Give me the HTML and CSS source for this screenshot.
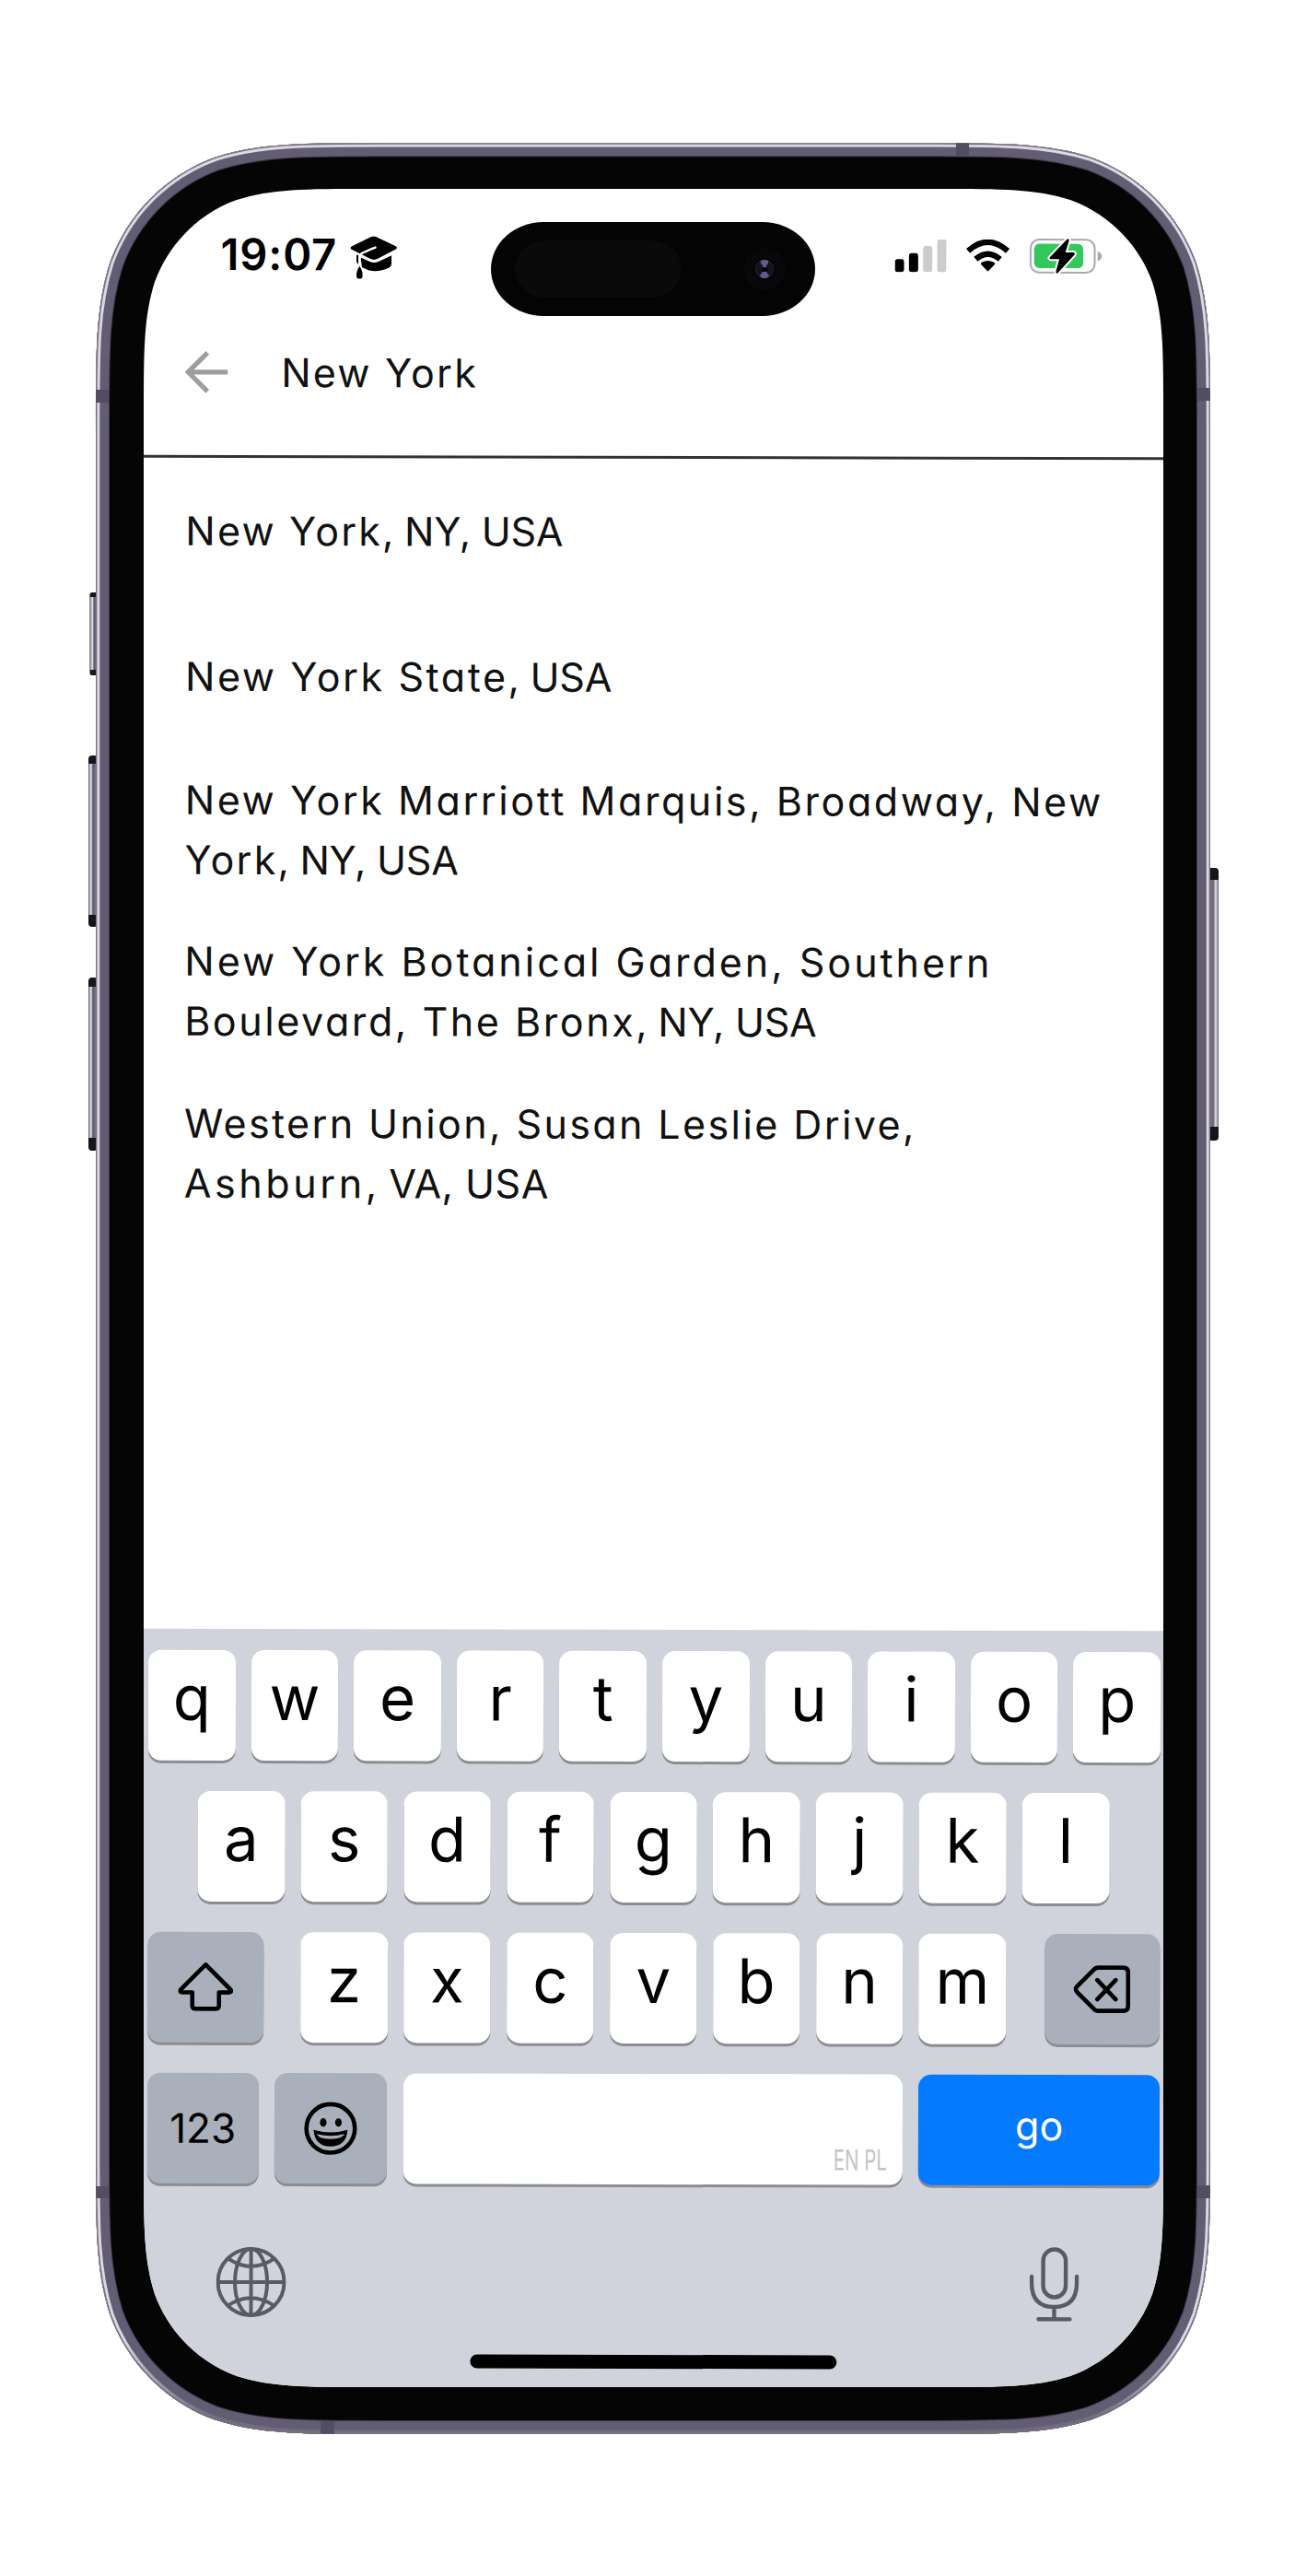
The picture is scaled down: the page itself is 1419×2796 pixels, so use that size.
FILE: index.html
```html
<!DOCTYPE html>
<html lang="en">
<head>
<meta charset="utf-8">
<title>Location search</title>
<link rel="stylesheet" href="styles.css">
</head>
<body>
<main class="stage">
  <svg class="frame" viewBox="0 0 1419 2796" aria-hidden="true">
    <defs>
      <path id="body" d="M417.4,155.300 H1000.600 c90.300,0 135.400,0 183.900,15.400 c53.100,19.300 94.800,61 114.100,114.100 c15.400,48.500 15.400,93.600 15.400,183.900 V2328.600 c0,90.300 0,135.400 -15.400,183.900 c-19.300,53.100 -61,94.800 -114.100,114.100 c-48.500,15.400 -93.600,15.400 -183.900,15.400 H417.400 c-90.300,0 -135.400,0 -183.900,-15.400 c-53.100,-19.300 -94.800,-61 -114.100,-114.100 c-15.400,-48.500 -15.400,-93.600 -15.400,-183.900 V468.700 c0,-90.300 0,-135.400 15.400,-183.900 c19.300,-53.100 61,-94.800 114.100,-114.100 c48.500,-15.400 93.600,-15.400 183.900,-15.400 Z"/>
      <clipPath id="clip"><use href="#body"/></clipPath>
      <linearGradient id="shine" gradientUnits="userSpaceOnUse" x1="0" y1="2540" x2="0" y2="2625"><stop offset="0" stop-color="#dcd9e4"/><stop offset="1" stop-color="#716b80"/></linearGradient>
      <linearGradient id="btn" x1="0" x2="1" y1="0" y2="0"><stop offset="0" stop-color="#8d8999"/><stop offset=".3" stop-color="#e6e3ec"/><stop offset=".5" stop-color="#5b5568"/><stop offset="1" stop-color="#8b8599"/></linearGradient>
      <linearGradient id="btnr" x1="1" x2="0" y1="0" y2="0"><stop offset="0" stop-color="#9a96a5"/><stop offset=".3" stop-color="#d6d3dd"/><stop offset=".5" stop-color="#6b6579"/><stop offset="1" stop-color="#7f798c"/></linearGradient>
    </defs>
    <g>
      <rect x="97.500" y="643" width="9" height="90" rx="2.500" fill="#17151c"/><rect x="98" y="648" width="8" height="79" fill="url(#btn)"/>
      <rect x="96" y="820" width="10" height="186" rx="4" fill="#17151c"/><rect x="96.300" y="829" width="9" height="164" fill="url(#btn)"/>
      <rect x="96" y="1061" width="10" height="188" rx="4" fill="#17151c"/><rect x="96.300" y="1071" width="9" height="164" fill="url(#btn)"/>
      <rect x="1311" y="942" width="12" height="296" rx="4" fill="#17151c"/><rect x="1312" y="955" width="10.700" height="268" fill="url(#btnr)"/>
    </g>
    <use href="#body" fill="#050505"/>
    <g clip-path="url(#clip)" fill="none">
      <use href="#body" stroke="#3d384a" stroke-width="30"/>
      <use href="#body" stroke="#635d73" stroke-width="28"/>
      <use href="#body" stroke="url(#shine)" stroke-width="8.500"/>
      <use href="#body" stroke="#77737f" stroke-width="2.800"/>
      <g fill="#534d63">
        <rect x="104" y="423" width="14" height="14"/><rect x="1300" y="421" width="14" height="14"/>
        <rect x="104" y="2373" width="14" height="13"/><rect x="1300" y="2372" width="14" height="14"/>
        <rect x="1038" y="155" width="14" height="15"/><rect x="348" y="2628" width="15" height="15"/>
      </g>
    </g>
  </svg>

  <div class="screen">
    <div class="view">
      <div class="status">
        <div class="status-left">
          <span class="time">19:07</span>
          <svg class="hat" viewBox="0 0 156 142"><path d="M70,2 Q78,-1 86,2 L151,33 Q158,38 151,43 L92,74 Q80,80 68,75 L6,44 Q-1,39 6,34Z"/><path d="M36,70 L66,84 Q80,90 94,84 L137,63 V92 Q136,100 128,104 Q80,126 40,102Z"/><path d="M84,37 Q70,42 42,55 Q32,60 32,70 V108" fill="none" stroke="#fff" stroke-width="7" stroke-linecap="round"/><path d="M22,62 H28 V92 Q22,88 22,82Z"/><path d="M32,98 Q44,116 42,132 Q41,140 32,140 Q23,140 22,132 Q21,116 32,98Z"/></svg>
        </div>
        <div class="status-right">
          <svg class="signal" viewBox="0 0 168 108"><rect y="65" width="30" height="42" rx="9"/><rect x="46" y="45" width="30" height="62" rx="9"/><g fill="#ccc"><rect x="92" y="22" width="30" height="85" rx="9"/><rect x="138" width="30" height="107" rx="9"/></g></svg>
          <svg class="wifi" viewBox="0 0 144 106"><path d="M72,106 L51,84 Q46,79 53,75 Q72,65 91,75 Q98,79 93,84Z"/><g fill="none" stroke="#000" stroke-width="19"><path d="M32,65 Q72,31 112,65"/><path d="M7,38 Q72,-20 137,38"/></g></svg>
          <svg class="battery" viewBox="0 0 236 114"><rect x="3.500" y="3.500" width="209" height="107" rx="28" fill="#fff" stroke="#a9a9ab" stroke-width="6"/><rect x="15" y="17" width="160" height="79" rx="17" fill="#34c759"/><path d="M222,41 Q236,48 236,57 Q236,67 222,74Z" fill="#a9a9ab"/><path d="M122,2 L67,60 Q62,66 70,67 H97 L86,108 Q86,116 93,111 L146,53 Q150,46 143,45 H117 L129,6 Q128,-2 122,2Z" stroke="#fff" stroke-width="12" paint-order="stroke"/></svg>
        </div>
      </div>

      <header class="search">
        <svg class="back" viewBox="0 0 48 46" fill="none" stroke="#9e9e9e" stroke-width="5.200"><path d="M47,23 H4 M25,2 L4,23 L25,44"/></svg>
        <span class="query">New York</span>
      </header>

      <ul class="results">
        <li><span>New York<span class="caps">, NY, USA</span></span></li>
        <li><span class="wide-2">New York State<span class="caps">, USA</span></span></li>
        <li><span class="wide-2">New York Marriott Marquis, Broadway, New</span><span>York<span class="caps">, NY, USA</span></span></li>
        <li><span class="wide-3">New York Botanical Garden, Southern</span><span class="wide-2">Boulevard, The Bronx<span class="caps">, NY, USA</span></span></li>
        <li><span class="wide-1">Western Union, Susan Leslie Drive,</span><span class="wide-4">Ashburn<span class="caps-loose">, VA, USA</span></span></li>
      </ul>

      <section class="keyboard">
        <div class="row"><b>q</b><b>w</b><b>e</b><b>r</b><b>t</b><b>y</b><b>u</b><b>i</b><b>o</b><b>p</b></div>
        <div class="row middle"><b>a</b><b>s</b><b>d</b><b>f</b><b>g</b><b>h</b><b>j</b><b>k</b><b>l</b></div>
        <div class="row">
          <div class="key fn wide"><svg class="shift" viewBox="0 0 60 52" preserveAspectRatio="none" fill="none" stroke="#000" stroke-width="4.600" stroke-linejoin="round"><path d="M30,2.500 L57,29 Q59,32 55,32 H44.500 V46 Q44.500,49.500 41,49.500 H19 Q15.500,49.500 15.500,46 V32 H5 Q1,32 3,29Z"/></svg></div>
          <div class="letters"><b>z</b><b>x</b><b>c</b><b>v</b><b>b</b><b>n</b><b>m</b></div>
          <div class="key fn wide"><svg class="delete" viewBox="0 0 62 52" fill="none" stroke="#000" stroke-width="4.600" stroke-linejoin="round" stroke-linecap="round"><path d="M27,2.500 H54 Q59.500,2.500 59.500,8 V44 Q59.500,49.500 54,49.500 H27 Q24,49.500 22,47 L4,29 Q1.500,26 4,23 L22,5 Q24,2.500 27,2.500Z M26,16 L46,37 M46,16 L26,37"/></svg></div>
        </div>
        <div class="row bottom">
          <div class="key fn num">123</div>
          <div class="key fn emoji"><svg viewBox="0 0 58 58"><circle cx="29" cy="29" r="26.300" fill="none" stroke="#000" stroke-width="4.600"/><ellipse cx="21" cy="22.500" rx="3.600" ry="4.600"/><ellipse cx="37.500" cy="22.500" rx="3.600" ry="4.600"/><path d="M10.500,30.500 Q29,36 47.500,30.500 Q46,48.500 29,48.500 Q12,48.500 10.500,30.500Z"/><path d="M14,35 Q29,39 44,35 Q43,40 29,40.500 Q15,40 14,35Z" fill="#a9afbb"/></svg></div>
          <div class="key space"><span class="lang">EN PL</span></div>
          <div class="key go">go</div>
        </div>
        <div class="dock">
          <svg class="globe" viewBox="0 0 76 76" fill="none" stroke="#575b64" stroke-width="4"><circle cx="38" cy="38" r="36"/><ellipse cx="38" cy="38" rx="17.500" ry="36"/><path d="M38,2 V74 M2,38 H74 M13,12.500 Q38,29 63,12.500 M13,63.500 Q38,47 63,63.500"/></svg>
          <svg class="mic" viewBox="0 0 54 81" fill="none" stroke="#575b64" stroke-width="4.400" stroke-linecap="round"><rect x="15" y="2.500" width="24.500" height="52" rx="12.250"/><path d="M2.500,32 V40 Q3,65 27,65 Q51,65 51.500,40 V32 M27,65 V78 M10,78.300 H44"/></svg>
        </div>
        <div class="home"></div>
      </section>
    </div>

    <div class="island">
      <div class="sensor"></div>
      <svg class="camera" viewBox="0 0 46 46"><circle cx="23" cy="23" r="22.500" fill="#08080a"/><circle cx="23" cy="23" r="12" fill="#000"/><circle cx="23" cy="23" r="10" fill="#14131b" stroke="#26252f"/><path d="M19,14 Q23,12 27,14 Q28,17 25,19 V21 H21 V19 Q18,17 19,14Z" fill="#5f5990"/><path d="M21,26 H25 L28,30 Q27,33 23,33 Q19,33 18,30Z" fill="#5f5990"/><ellipse cx="23" cy="23.500" rx="3.500" ry="2.300" fill="#040406"/></svg>
    </div>
  </div>
</main>
</body>
</html>
```
FILE: styles.css
```css
* { box-sizing: border-box; }
body { margin: 0; background: #fff; font-family: Inter, "Liberation Sans", sans-serif; color: #000; }
svg { display: block; flex: none; }

.stage { position: relative; width: 1419px; height: 2796px; padding: 205px 156px; overflow: hidden; }
.frame { position: absolute; inset: 0; width: 1419px; height: 2796px; }

.screen {
  position: relative; width: 1107px; height: 2386px; background: #fff;
  clip-path: path("M244.600,0 H862.400 c70.400,0 105.700,0 143.600,12 c41.300,15 74,47.700 89,89 c12,37.900 12,73.200 12,143.600 V2141.400 c0,70.400 0,105.700 -12,143.600 c-15,41.300 -47.700,74 -89,89 c-37.900,12 -73.200,12 -143.600,12 H244.600 c-70.400,0 -105.700,0 -143.600,-12 c-41.300,-15 -74,-47.700 -89,-89 c-12,-37.900 -12,-73.200 -12,-143.600 V244.600 c0,-70.400 0,-105.700 12,-143.600 c15,-41.300 47.700,-74 89,-89 c37.900,-12 73.200,-12 143.600,-12 Z");
}
.view { display: flex; flex-direction: column; height: 2392px; margin: 0 -6px; transform: rotate(0.13deg); }

.status { display: flex; justify-content: space-between; align-items: center; height: 143px; padding: 0 75px 0 87px; }
.status-left, .status-right { display: flex; align-items: center; }
.time { width: 140px; font-size: 47px; font-weight: 600; line-height: 56px; letter-spacing: 0.900px; white-space: nowrap; }
.hat { width: 52px; height: 47px; margin-top: 8px; }
.signal { width: 56px; height: 36px; }
.wifi { width: 48px; height: 35px; margin-left: 21px; }
.battery { width: 79px; height: 38px; margin-left: 21px; }

.search { display: flex; align-items: center; height: 150px; padding: 1px 50px 35px 48px; border-bottom: 3px solid #333; }
.back { width: 48px; height: 46px; }
.query { margin-left: 57px; font-size: 43px; letter-spacing: 2.200px; color: #111; white-space: nowrap; font-feature-settings: "cv11"; }

.results { flex: 1; margin: 0; padding: 0 0 0 49.500px; list-style: none; font-size: 43px; line-height: 65px; letter-spacing: 2.200px; color: #111; font-feature-settings: "cv11"; }
.results li { display: flex; flex-direction: column; align-items: flex-start; justify-content: center; min-height: 158px; padding: 22.750px 0; }
.results span { white-space: nowrap; }
.wide-1 { letter-spacing: 2.400px; }
.wide-2 { letter-spacing: 2.580px; }
.wide-3 { letter-spacing: 3px; }
.wide-4 { letter-spacing: 3.600px; }
.caps { letter-spacing: -0.250px; }
.caps-loose { letter-spacing: 0.500px; }

.keyboard { height: 828px; padding: 23px 8px 0 12px; background: #d0d3db; }
.row { display: flex; justify-content: space-between; height: 119.500px; margin-bottom: 33.500px; }
.row b, .key { display: flex; align-items: center; justify-content: center; height: 119.500px; border-radius: 14px; background: #fff; box-shadow: 0 3px 0 #8b8d92; }
.row b { width: 94.500px; padding-bottom: 16px; font-size: 67px; font-weight: 400; }
.row .fn { background: #a9afbb; }
.middle { padding: 0 55.500px 0 54px; }
.letters { display: flex; justify-content: space-between; width: 766px; margin-left: -1px; }
.wide { width: 125.500px; }
.shift { width: 60px; height: 53px; }
.delete { width: 62px; height: 52px; }
.num { width: 120.500px; font-size: 44px; }
.emoji { width: 122px; }
.emoji svg { width: 58px; height: 58px; }
.space { width: 542px; }
.row .space { align-items: flex-end; justify-content: flex-end; padding: 0 17px 8px; }
.lang { font-size: 31px; line-height: 38px; color: #c4c4c6; transform: scaleX(0.660); transform-origin: right; white-space: nowrap; }
.row .go { width: 261.500px; background: #037aff; color: #fff; font-size: 43px; padding-bottom: 9px; }
.dock { display: flex; justify-content: space-between; align-items: center; height: 82px; margin-top: 66.500px; padding: 0 87px 0 75px; }
.globe { width: 76px; height: 76px; }
.mic { width: 54px; height: 81px; }
.home { width: 398px; height: 14.500px; margin: 37.300px 0 0 351px; border-radius: 8px; background: #000; }

.island { position: absolute; left: 377px; top: 36px; display: flex; align-items: center; justify-content: space-between; width: 352px; height: 102px; padding: 0 32px 0 26px; border-radius: 57px / 51px; background: #040404; }
.sensor { width: 181px; height: 62px; border-radius: 34px / 31px; background: #0a0a0a; }
.camera { width: 46px; height: 46px; }
```
